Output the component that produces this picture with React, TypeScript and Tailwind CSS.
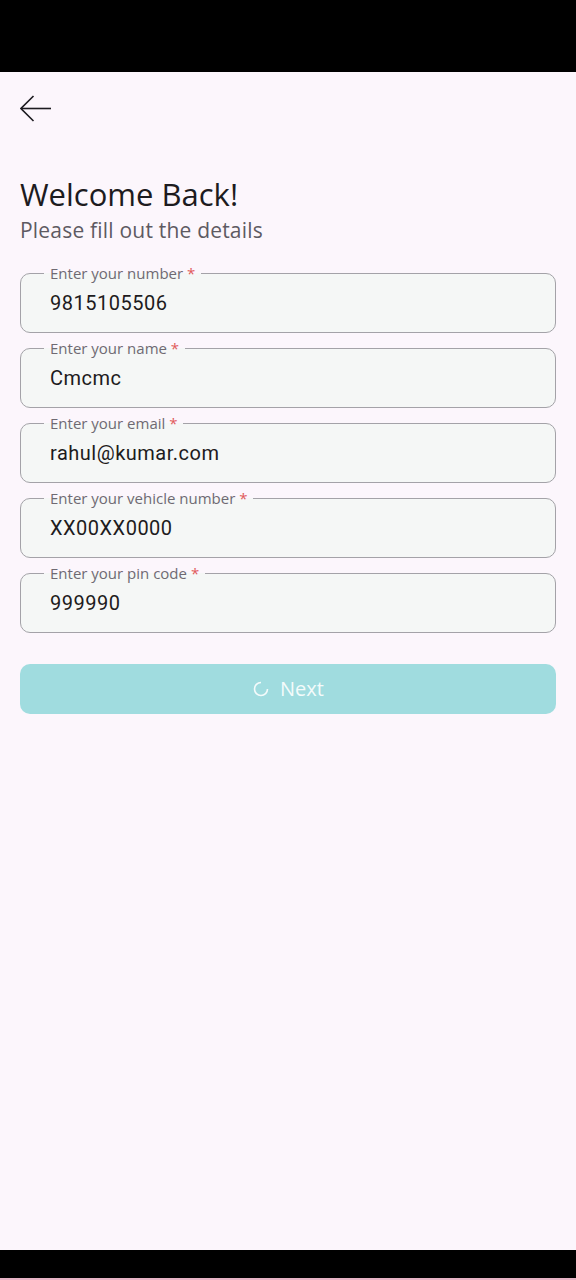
const fields = [
  { label: "Enter your number", value: "9815105506" },
  { label: "Enter your name", value: "Cmcmc" },
  { label: "Enter your email", value: "rahul@kumar.com" },
  { label: "Enter your vehicle number", value: "XX00XX0000" },
  { label: "Enter your pin code", value: "999990" },
];

const Field = ({ label, value }: { label: string; value: string }) => (
  <fieldset className="m-0 h-[70px] rounded-[10px] border border-[#a4a2a8] bg-[#f5f7f6] p-0">
    <legend className="ml-[23px] px-[6px] font-['Open_Sans'] text-[15px] leading-[20px] text-[#6f6a73]">
      {label} <span className="text-[#e05a5a]">*</span>
    </legend>
    <div className="pl-[29px] pt-[8px] font-['Roboto'] text-[20px] leading-[24px] tracking-[0.5px] text-[#1d1b20]">
      {value}
    </div>
  </fieldset>
);

export default function App() {
  return (
    <div className="flex h-[1280px] w-[576px] flex-col bg-[#fcf6fc]">
      <div className="h-[72px] bg-black" />
      <div className="flex flex-1 flex-col px-5">
        <button className="mt-[23px] h-[28px] w-[32px]">
          <svg width="32" height="28" viewBox="0 0 32 28" fill="none" stroke="#1d1b20" strokeWidth="1.6">
            <path d="M1 13.5H31" />
            <path d="M13.5 1L1 13.5L13.5 26" />
          </svg>
        </button>
        <h1 className="mt-[51px] font-['Open_Sans'] text-[31px] leading-[40px] text-[#1d1b20]">
          Welcome Back!
        </h1>
        <p className="mt-[2px] font-['Open_Sans'] text-[21px] leading-[28px] tracking-[0.2px] text-[#5e5a62]">
          Please fill out the details
        </p>
        <div className="mt-[19px] flex flex-col gap-[5px]">
          {fields.map((f) => (
            <Field key={f.label} {...f} />
          ))}
        </div>
        <button className="mt-[31px] flex h-[50px] items-center justify-center gap-[10px] rounded-[10px] bg-[#a0dcdf]">
          <svg width="18" height="18" viewBox="0 0 18 18" fill="none" stroke="#f4fbfb" strokeWidth="1.6">
            <path d="M15.5 9A6.5 6.5 0 1 1 9 2.5" />
          </svg>
          <span className="font-['Open_Sans'] text-[20px] text-[#f4fbfb]">Next</span>
        </button>
      </div>
      <div className="h-[28px] bg-black" />
      <div className="h-[2px] bg-[#e6b3c5]" />
    </div>
  );
}
